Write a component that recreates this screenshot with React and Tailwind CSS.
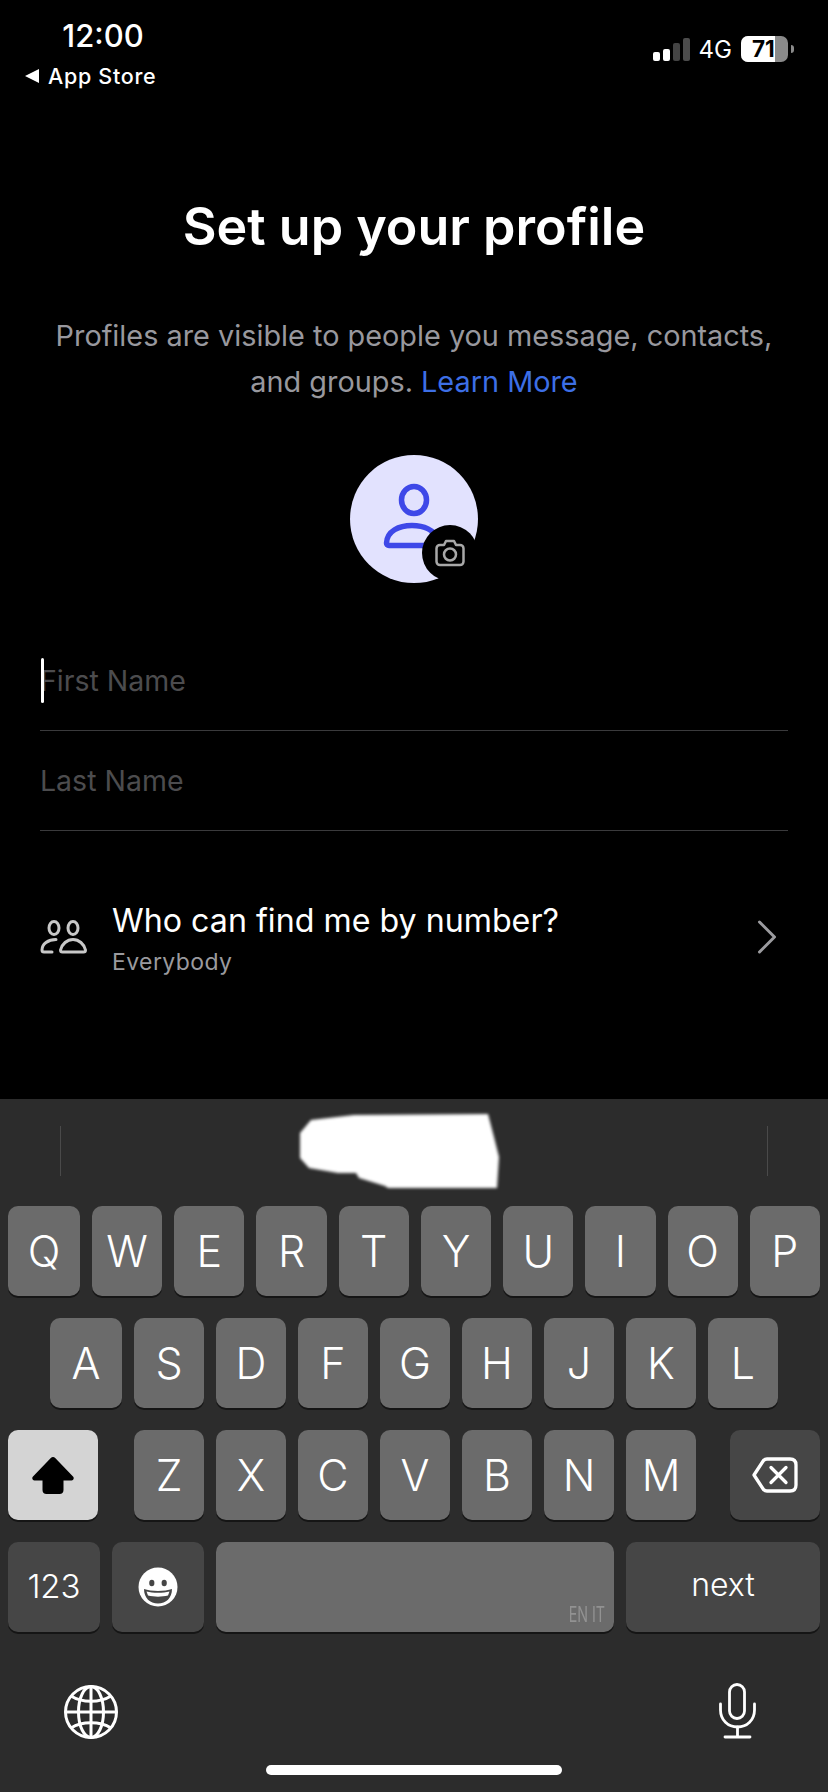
import React from "react";

const rows = ["QWERTYUIOP", "ASDFGHJKL", "ZXCVBNM"];

function Key({ children, className = "" }) {
  return (
    <div className={`h-[90px] rounded-[10px] flex items-center justify-center shadow-[0_2px_0_#151515] ${className}`}>
      {children}
    </div>
  );
}

function LetterKey({ letter, className = "" }) {
  return (
    <Key className={`bg-[#6b6b6b] text-white text-[43px] font-light ${className}`}>
      {letter}
    </Key>
  );
}

function StatusBar() {
  return (
    <div className="h-[100px] flex justify-between">
      <div className="pt-[16px]">
        <div className="w-[206px] text-center text-white text-[31px] leading-[40px] font-medium">12:00</div>
        <div className="flex items-center pl-[25px] mt-[6px] text-white text-[21.500px] leading-[28px] font-medium tracking-[0.7px]">
          <span className="w-0 h-0 border-y-[7px] border-y-transparent border-r-[14px] border-r-white mr-[9px]"></span>
          App Store
        </div>
      </div>
      <div className="flex items-center h-[26px] mt-[36px] pr-[34px]">
        <div className="flex items-end gap-[3.500px] h-[23px] mt-[1px]">
          <div className="w-[6.500px] h-[9px] rounded-[2px] bg-white"></div>
          <div className="w-[6.500px] h-[12px] rounded-[2px] bg-white"></div>
          <div className="w-[6.500px] h-[18px] rounded-[2px] bg-[#444]"></div>
          <div className="w-[6.500px] h-[23px] rounded-[2px] bg-[#4c4c4c]"></div>
        </div>
        <span className="ml-[9px] text-white text-[24px] font-normal mt-[1px]">4G</span>
        <div className="relative ml-[9px] w-[47px] h-[26px] rounded-[7px] bg-[#8a8a8a] overflow-hidden">
          <div className="w-[34px] h-full bg-white"></div>
          <span className="absolute inset-0 pl-[11px] text-black text-[22.500px] leading-[26px] font-bold">71</span>
        </div>
        <div className="ml-[3px] w-[3px] h-[8px] rounded-r-full bg-[#8a8a8a]"></div>
      </div>
    </div>
  );
}

function Avatar() {
  return (
    <div className="relative w-[128px] h-[128px] rounded-full bg-[#e2e2fe] flex items-center justify-center">
      <svg width="128" height="128" viewBox="0 0 128 128" fill="none" stroke="#3e48e8" strokeWidth="5.500">
        <ellipse cx="64" cy="45" rx="12.500" ry="13.500" />
        <path d="M36.500 88 C37 76 49 70.500 62 70.500 C74 70.500 84 75 88 84 L88 90.500 H39 C37.500 90.500 36.500 89.500 36.500 88 Z" strokeLinejoin="round" />
      </svg>
      <div className="absolute left-[72px] top-[70px] w-[56px] h-[56px] rounded-full bg-black flex items-center justify-center">
        <svg width="30" height="28" viewBox="0 0 30 28" fill="none" stroke="#a8a8a8" strokeWidth="2.500" strokeLinejoin="round">
          <path d="M5 6 H9 L11 2 H19 L21 6 H25 C27 6 28.500 7.500 28.500 9.500 V22.500 C28.500 24.500 27 26 25 26 H5 C3 26 1.500 24.500 1.500 22.500 V9.500 C1.500 7.500 3 6 5 6 Z" />
          <circle cx="15" cy="15.500" r="6" />
        </svg>
      </div>
    </div>
  );
}

function NameField({ label, caret }) {
  return (
    <div className="relative h-[88px] border-b border-[#3a3a3c] flex items-center">
      {caret && <div className="absolute left-[1px] top-[15px] w-[3px] h-[45px] bg-white rounded-full"></div>}
      <span className="text-[#4c4c4e] text-[28.500px] -mt-[10px]">{label}</span>
    </div>
  );
}

function FindRow() {
  return (
    <div className="mt-[69px] px-[40px] flex items-center">
      <svg width="47" height="34" viewBox="0 0 47 34" fill="none" stroke="#c8c8c8" strokeWidth="3" className="shrink-0 mb-[4px]">
        <ellipse cx="14" cy="8" rx="5" ry="6.500" />
        <ellipse cx="33" cy="8" rx="5" ry="6.500" />
        <path d="M16 19.500 C8 19.500 2 24 2 30 C2 31.500 3 32 4 32 H12" strokeLinecap="round" />
        <path d="M22.500 32 H43.500 C45 32 45.500 31 45.500 30 C44 24 39 19.500 33 19.500 C27 19.500 22 24 20.500 30 C20.500 31 21 32 22.500 32 Z" strokeLinejoin="round" />
      </svg>
      <div className="ml-[25px] flex-1">
        <div className="text-white text-[32.200px] leading-[42px]">Who can find me by number?</div>
        <div className="text-[#9a9a9e] text-[23px] leading-[30px] mt-[5px] tracking-[0.4px]">Everybody</div>
      </div>
      <svg width="20" height="34" viewBox="0 0 20 34" fill="none" stroke="#9b9b9f" strokeWidth="3" strokeLinecap="round" strokeLinejoin="round" className="mr-[11px] mb-[4px]">
        <path d="M2.500 2 L17.500 17 L2.500 32" />
      </svg>
    </div>
  );
}

function Keyboard() {
  return (
    <div className="flex-1 bg-[#2c2c2c] flex flex-col">
      {/* suggestion bar */}
      <div className="h-[107px] px-[60px] flex justify-between pt-[27px]">
        <div className="w-px h-[50px] bg-[#4a4a4a]"></div>
        <div className="w-px h-[50px] bg-[#4a4a4a]"></div>
      </div>

      <div className="flex flex-col gap-[22px]">
        <div className="flex gap-[12px] px-[8px]">
          {rows[0].split("").map((l, i) => (
            <LetterKey key={l} letter={l} className={i === 0 ? "w-[72px]" : "flex-1"} />
          ))}
        </div>
        <div className="flex gap-[12px] pl-[50px]">
          {rows[1].split("").map((l, i) => (
            <LetterKey key={l} letter={l} className={i === 0 ? "w-[72px]" : "w-[70px]"} />
          ))}
        </div>
        <div className="flex px-[8px]">
          <Key className="w-[90px] bg-[#d4d4d4]">
            <svg width="42" height="37" viewBox="0 0 42 37" fill="#000">
              <path d="M18.800 1 C20 -0.200 22 -0.200 23.200 1 L41 19.500 C42.500 21 41.500 23.500 39.500 23.500 H31.500 V33 C31.500 35.500 30 37 27.500 37 H14.500 C12 37 10.500 35.500 10.500 33 V23.500 H2.500 C0.500 23.500 -0.500 21 1 19.500 Z" />
            </svg>
          </Key>
          <div className="flex gap-[12px] ml-[36px]">
            {rows[2].split("").map((l) => <LetterKey key={l} letter={l} className="w-[70px]" />)}
          </div>
          <Key className="w-[90px] ml-auto bg-[#464646]">
            <svg width="46" height="36" viewBox="0 0 46 36" fill="none" stroke="#fff" strokeWidth="3.300" strokeLinejoin="round" strokeLinecap="round">
              <path d="M15 2 H38 C42 2 44 4 44 8 V28 C44 32 42 34 38 34 H15 C13.500 34 12.500 33.500 11.500 32.500 L2 18 L11.500 3.500 C12.500 2.500 13.500 2 15 2 Z" />
              <path d="M19 10.500 L34 25.500 M34 10.500 L19 25.500" />
            </svg>
          </Key>
        </div>
        <div className="flex gap-[12px] px-[8px]">
          <Key className="w-[92px] bg-[#464646] text-white text-[33px] font-light">123</Key>
          <Key className="w-[92px] bg-[#464646]">
            <svg width="40" height="40" viewBox="0 0 40 40">
              <circle cx="20" cy="20" r="19.500" fill="#fff" />
              <ellipse cx="13.800" cy="16" rx="2.600" ry="3.300" fill="#464646" />
              <ellipse cx="26.200" cy="16" rx="2.600" ry="3.300" fill="#464646" />
              <path d="M6 22 C13 24.500 27 24.500 34 22 C34 31 28 36.500 20 36.500 C12 36.500 6 31 6 22 Z" fill="#464646" />
              <path d="M8.500 24.500 C15 26.300 25 26.300 31.500 24.500 L30 28.500 C24 30 16 30 10 28.500 Z" fill="#fff" />
            </svg>
          </Key>
          <Key className="flex-1 bg-[#6b6b6b] !items-end !justify-end pb-[6px] pr-[9px]">
            <span className="text-[#929292] text-[22px] leading-[24px] scale-x-[0.65] origin-right">EN IT</span>
          </Key>
          <Key className="w-[194px] bg-[#464646] text-white text-[32px] font-light pb-[4px]">next</Key>
        </div>
      </div>

      {/* globe + mic */}
      <div className="flex justify-between items-start pl-[64px] pr-[71px] mt-[51px]">
        <svg width="54" height="54" viewBox="0 0 54 54" fill="none" stroke="#fff" strokeWidth="3" className="mt-[2px]">
          <circle cx="27" cy="27" r="25.500" />
          <ellipse cx="27" cy="27" rx="12.500" ry="25.500" />
          <path d="M27 1.500 V52.500 M1.500 27 H52.500" />
          <path d="M7 11 C18 18 36 18 47 11 M7 43 C18 36 36 36 47 43" />
        </svg>
        <svg width="38" height="56" viewBox="0 0 38 56" fill="none" stroke="#fff" strokeWidth="2.800" strokeLinecap="round">
          <rect x="10.500" y="1.500" width="15" height="34" rx="7.500" />
          <path d="M1.500 21 V27 C1.500 37 9 44 18.500 44 C28 44 35.500 37 35.500 27 V21" />
          <path d="M18.500 44 V54 M6 54 H31" />
        </svg>
      </div>

      <div className="mt-[26px] mx-auto w-[296px] h-[10px] rounded-full bg-white"></div>
    </div>
  );
}

export default function App() {
  return (
    <div className="relative w-[828px] h-[1792px] bg-black flex flex-col font-['Inter','Noto_Sans',sans-serif] overflow-hidden">
      <div className="h-[1099px] shrink-0">
        <StatusBar />
        <h1 className="mt-[93px] text-center text-white text-[52px] leading-[68px] font-semibold">Set up your profile</h1>
        <p className="mt-[52px] text-center text-[#98989e] text-[28.850px] leading-[46px]">
          Profiles are visible to people you message, contacts,
          <br />
          and groups. <span className="text-[#3d6fe6]">Learn More</span>
        </p>
        <div className="mt-[50px] flex justify-center">
          <Avatar />
        </div>
        <div className="mt-[60px] mx-[40px]">
          <NameField label="First Name" caret />
          <div className="h-[12px]"></div>
          <NameField label="Last Name" />
        </div>
        <FindRow />
      </div>
      <Keyboard />

      {/* scribbled-out suggestion */}
      <svg width="210" height="86" viewBox="0 0 210 86" fill="#fff" className="absolute left-[295px] top-[1108px] blur-[1.500px]">
        <path d="M16 12 L59 7 L193 6 L199 29 L204 49 L202 80 L93 80 L90 78 L64 70 L61 65 L43 65 L14 60 L5 50 L5 25 Z" />
      </svg>
    </div>
  );
}
